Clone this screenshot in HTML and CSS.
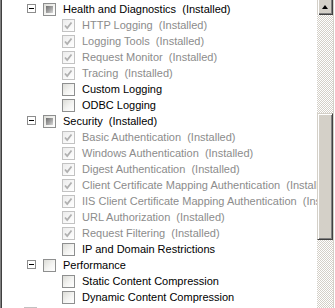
FILE: index.html
```html
<!DOCTYPE html>
<html>
<head>
<meta charset="utf-8">
<link rel="stylesheet" href="styles.css">
</head>
<body>
<div class="frame">
  <div class="frame-inner">
    <div class="tree">
      <div class="row l1"><span class="exp"><i></i></span><span class="cb tri"></span><span class="label">Health and Diagnostics  (Installed)</span></div>
      <div class="row l2 dis"><span class="cb on"><svg viewBox="0 0 11 11"><path d="M2 5.5 L4.2 8 L8.5 2.5"/></svg></span><span class="label">HTTP Logging  (Installed)</span></div>
      <div class="row l2 dis"><span class="cb on"><svg viewBox="0 0 11 11"><path d="M2 5.5 L4.2 8 L8.5 2.5"/></svg></span><span class="label">Logging Tools  (Installed)</span></div>
      <div class="row l2 dis"><span class="cb on"><svg viewBox="0 0 11 11"><path d="M2 5.5 L4.2 8 L8.5 2.5"/></svg></span><span class="label">Request Monitor  (Installed)</span></div>
      <div class="row l2 dis"><span class="cb on"><svg viewBox="0 0 11 11"><path d="M2 5.5 L4.2 8 L8.5 2.5"/></svg></span><span class="label">Tracing  (Installed)</span></div>
      <div class="row l2"><span class="cb"></span><span class="label">Custom Logging</span></div>
      <div class="row l2"><span class="cb"></span><span class="label">ODBC Logging</span></div>
      <div class="row l1"><span class="exp"><i></i></span><span class="cb tri"></span><span class="label">Security  (Installed)</span></div>
      <div class="row l2 dis"><span class="cb on"><svg viewBox="0 0 11 11"><path d="M2 5.5 L4.2 8 L8.5 2.5"/></svg></span><span class="label">Basic Authentication  (Installed)</span></div>
      <div class="row l2 dis"><span class="cb on"><svg viewBox="0 0 11 11"><path d="M2 5.5 L4.2 8 L8.5 2.5"/></svg></span><span class="label">Windows Authentication  (Installed)</span></div>
      <div class="row l2 dis"><span class="cb on"><svg viewBox="0 0 11 11"><path d="M2 5.5 L4.2 8 L8.5 2.5"/></svg></span><span class="label">Digest Authentication  (Installed)</span></div>
      <div class="row l2 dis"><span class="cb on"><svg viewBox="0 0 11 11"><path d="M2 5.5 L4.2 8 L8.5 2.5"/></svg></span><span class="label">Client Certificate Mapping Authentication  (Installed)</span></div>
      <div class="row l2 dis"><span class="cb on"><svg viewBox="0 0 11 11"><path d="M2 5.5 L4.2 8 L8.5 2.5"/></svg></span><span class="label">IIS Client Certificate Mapping Authentication  (Installed)</span></div>
      <div class="row l2 dis"><span class="cb on"><svg viewBox="0 0 11 11"><path d="M2 5.5 L4.2 8 L8.5 2.5"/></svg></span><span class="label">URL Authorization  (Installed)</span></div>
      <div class="row l2 dis"><span class="cb on"><svg viewBox="0 0 11 11"><path d="M2 5.5 L4.2 8 L8.5 2.5"/></svg></span><span class="label">Request Filtering  (Installed)</span></div>
      <div class="row l2"><span class="cb"></span><span class="label">IP and Domain Restrictions</span></div>
      <div class="row l1"><span class="exp"><i></i></span><span class="cb"></span><span class="label">Performance</span></div>
      <div class="row l2"><span class="cb"></span><span class="label">Static Content Compression</span></div>
      <div class="row l2"><span class="cb"></span><span class="label">Dynamic Content Compression</span></div>
      <div class="row l0 dis"><span class="exp"><i></i></span><span class="cb on"><svg viewBox="0 0 11 11"><path d="M2 5.5 L4.2 8 L8.5 2.5"/></svg></span><span class="label">Management Tools  (Installed)</span></div>
    </div>
    <div class="vscroll">
      <div class="sbtn"><span class="arrow"></span></div>
      <div class="track track-top"></div>
      <div class="thumb"></div>
      <div class="track track-bottom"></div>
    </div>
  </div>
</div>
</body>
</html>
```
FILE: styles.css
```css
html, body {
  margin: 0;
  padding: 0;
  background: #fff;
}
.frame {
  width: 335px;
  height: 308px;
  box-sizing: border-box;
  border-left: 1px solid #808080;
  border-right: 1px solid #ffffff;
  overflow: hidden;
}
.frame-inner {
  height: 100%;
  box-sizing: border-box;
  border-left: 1px solid #404040;
  border-right: 1px solid #d4d0c8;
  display: flex;
}
.tree {
  flex: 1;
  min-width: 0;
  overflow: hidden;
  padding-top: 1px;
  font-family: "Liberation Sans", Arial, sans-serif;
  font-size: 11px;
  color: #000;
}
.row {
  height: 16px;
  display: flex;
  align-items: flex-start;
  white-space: pre;
}
.row.l0 { padding-left: 6px; }
.row.l1 { padding-left: 25px; }
.row.l2 { padding-left: 60px; }
.row.dis { color: #8c8c8c; }
.exp {
  flex: none;
  width: 9px;
  height: 9px;
  box-sizing: border-box;
  border: 1px solid #8c8c8c;
  background: #fff;
  margin-top: 3px;
  margin-right: 7px;
  position: relative;
}
.exp i {
  position: absolute;
  left: 1px;
  top: 3px;
  width: 5px;
  height: 1px;
  background: #000;
}
.cb {
  flex: none;
  width: 13px;
  height: 13px;
  box-sizing: border-box;
  border: 1px solid #8e8f8f;
  background: linear-gradient(135deg, #dcdcd7 0%, #f4f4f2 55%, #ffffff 100%);
  margin-top: 2px;
  margin-right: 7px;
  position: relative;
}
.dis .cb {
  border-color: #c2c2c2;
  background: linear-gradient(135deg, #ececec 0%, #f8f8f8 60%, #ffffff 100%);
}
.cb svg {
  position: absolute;
  left: 0;
  top: 0;
  width: 11px;
  height: 11px;
}
.cb svg path {
  fill: none;
  stroke: #b0b0b0;
  stroke-width: 1.8;
}
.cb.tri::after {
  content: "";
  position: absolute;
  left: 2px;
  top: 2px;
  width: 7px;
  height: 7px;
  background: linear-gradient(135deg, #6e6e6e 0%, #a8a8a8 60%, #d8d8d8 100%);
}
.label {
  line-height: 16px;
  margin-top: 0;
}
.vscroll {
  flex: none;
  width: 16px;
  display: flex;
  flex-direction: column;
}
.sbtn {
  flex: none;
  height: 15px;
  background: #d4d0c8;
  box-shadow: inset 1px 0 0 #ffffff, inset -1px -1px 0 #404040, inset -2px -2px 0 #808080;
  border-left: 1px solid #d4d0c8;
  display: flex;
  align-items: center;
  justify-content: center;
}
.arrow {
  width: 0;
  height: 0;
  border-left: 3.5px solid transparent;
  border-right: 3.5px solid transparent;
  border-bottom: 4px solid #000;
  margin-top: -2px;
  margin-left: -1px;
}
.track {
  background-color: #ffffff;
  background-image: conic-gradient(#d4d0c8 25%, #ffffff 0 50%, #d4d0c8 0 75%, #ffffff 0);
  background-size: 2px 2px;
}
.track-top { flex: none; height: 98px; }
.thumb {
  flex: none;
  height: 127px;
  box-sizing: border-box;
  background: #d4d0c8;
  border-top: 1px solid #d4d0c8;
  border-left: 1px solid #d4d0c8;
  border-right: 1px solid #404040;
  border-bottom: 1px solid #404040;
  box-shadow: inset 1px 1px 0 #ffffff, inset -1px -1px 0 #808080;
}
.track-bottom { flex: 1; }
```
